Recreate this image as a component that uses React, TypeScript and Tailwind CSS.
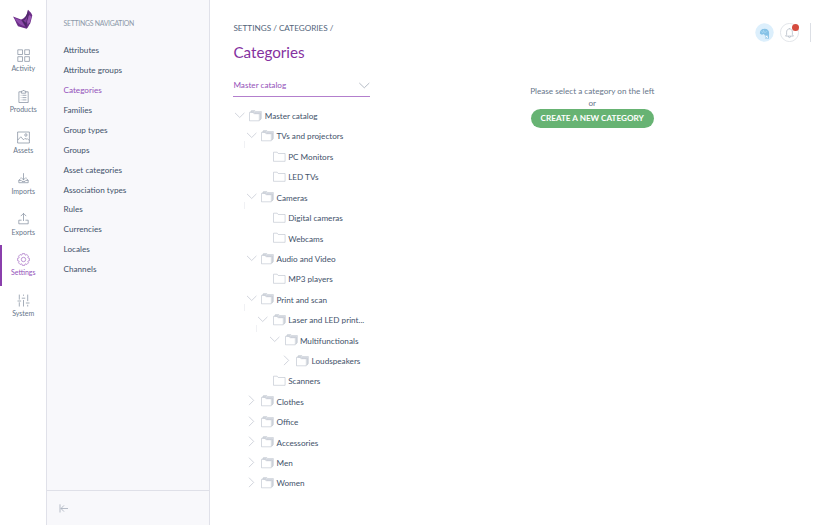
import React from "react";

type RailName = "Activity" | "Products" | "Assets" | "Imports" | "Exports" | "Settings" | "System";

const gear = (() => {
  const points: string[] = [];
  for (let i = 0; i < 8; i++) {
    const a = (i * Math.PI) / 4;
    for (const [d, r] of [[-0.3, 4.9], [-0.2, 6], [0.2, 6], [0.3, 4.9]]) {
      points.push(`${(6.5 + r * Math.cos(a + d)).toFixed(2)} ${(6.5 + r * Math.sin(a + d)).toFixed(2)}`);
    }
  }
  return `M${points.join("L")}Z`;
})();

const railPaths: Record<RailName, string> = {
  Activity: "M.8 .8h4.7v4.7H.8zM7.7 .8h4.7v4.7H7.7zM.8 7.7h4.7v4.7H.8zM7.7 7.7h4.7v4.7H7.7z",
  Products: "M4.5 1.8H1.9v10.7h9.3V1.8H8.6M4.4 1.2h1.1L6 .4h1.1l.5.8h1.1v2H4.4zM3.8 5.3h.6M5.4 5.3h4M3.8 7.6h.6M5.4 7.6h4M3.8 9.9h.6M5.4 9.9h4",
  Assets: "M.6 1h11.8v11H.6zM.8 9l3-3.2 2.7 3 1.5-1.5 1.2 1 1-.8 2 2M7.8 4a1.1 1.3 0 1 0 2.2 0a1.1 1.3 0 1 0-2.2 0",
  Imports: "M6.5 2.2v6.6M4 6.4l2.5 2.5L9 6.4M3.5 7.5 1.8 9.4v2.3h9.4V9.4L9.5 7.5M1.8 9.4h2.4l.8 1h3l.8-1h2.4",
  Exports: "M6.5 9V1.4M3.8 4.1l2.7-2.7 2.7 2.7M4.6 8.2H1.8v3.6h9.4V8.2H8.4",
  Settings: gear + "M4.3 6.5a2.2 2.2 0 1 0 4.4 0a2.2 2.2 0 1 0-4.4 0",
  System: "M2.3 .6v5M2.3 8.3v4.2M.5 7h3.6M6.5 .6v1.2M6.5 6v6.5M4.8 4.2h3.4M10.7 .6v6.5M10.7 10.8v1.7M8.9 9h3.6",
};

const rail = Object.keys(railPaths) as RailName[];

const nav = [
  "Attributes", "Attribute groups", "Categories", "Families", "Group types", "Groups",
  "Asset categories", "Association types", "Rules", "Currencies", "Locales", "Channels",
];

type Node = { label: string; level: number; kind: "open" | "closed" | "leaf"; guide?: number };

const tree: Node[] = [
  { label: "Master catalog", level: 0, kind: "open" },
  { label: "TVs and projectors", level: 1, kind: "open", guide: 1 },
  { label: "PC Monitors", level: 2, kind: "leaf" },
  { label: "LED TVs", level: 2, kind: "leaf" },
  { label: "Cameras", level: 1, kind: "open", guide: 1 },
  { label: "Digital cameras", level: 2, kind: "leaf" },
  { label: "Webcams", level: 2, kind: "leaf" },
  { label: "Audio and Video", level: 1, kind: "open" },
  { label: "MP3 players", level: 2, kind: "leaf" },
  { label: "Print and scan", level: 1, kind: "open", guide: 1 },
  { label: "Laser and LED print...", level: 2, kind: "open", guide: 2 },
  { label: "Multifunctionals", level: 3, kind: "open" },
  { label: "Loudspeakers", level: 4, kind: "closed" },
  { label: "Scanners", level: 2, kind: "leaf" },
  { label: "Clothes", level: 1, kind: "closed" },
  { label: "Office", level: 1, kind: "closed" },
  { label: "Accessories", level: 1, kind: "closed" },
  { label: "Men", level: 1, kind: "closed" },
  { label: "Women", level: 1, kind: "closed" },
];

const indents = ["pl-[1.7px]", "pl-[13.4px]", "pl-[25.1px]", "pl-[36.8px]", "pl-[48.5px]"];

function RailItem({ name }: { name: RailName }) {
  const active = name === "Settings";
  return (
    <a className={`flex h-[40.8px] flex-col items-center border-l-2 pr-[1.5px] pt-[8px] ${active ? "border-[#8a3fac] text-[#9452ba]" : "border-transparent text-[#67768a]"}`}>
      <svg width="13" height="13" viewBox="0 0 13 13" fill="none" stroke="currentColor" strokeWidth="0.65" strokeLinejoin="round" opacity="0.9">
        <path d={railPaths[name]} />
      </svg>
      <span className="mt-[1.35px] text-[7px] leading-[10px]">{name}</span>
    </a>
  );
}

function Arrow({ kind }: { kind: Node["kind"] }) {
  return (
    <svg width="10" height="12" viewBox="0 0 10 12" fill="none" stroke="#bec3ce" strokeWidth="0.7">
      {kind === "open" && <path d="M0 2.9 4.7 7.5l4.7-4.6" />}
      {kind === "closed" && <path d="M2 .7 6.7 5.4 2 10.1" />}
    </svg>
  );
}

function Folder({ stacked }: { stacked: boolean }) {
  return (
    <svg className="ml-[4.4px]" width="13" height="12" viewBox="0 0 13 12" fill="none" stroke="#b9bfcb" strokeWidth="0.6" strokeLinejoin="round">
      {stacked ? (
        <>
          <path fill="#e4e7ec" stroke="#bec4cf" strokeWidth="0.5" d="M2.4 2V.5h3.4l.8 1h5.8v7.1l-1 1.1V3.6H6L5.2 2.5H2z" />
          <path fill="#fff" d="M.5 2.4h3.6l.8 1.3h5.4v7.1H.5z" />
          <path strokeWidth="0.4" d="M1.4 2.3v-.8h3.7l.8 1.1h5.5v7.2h-1" />
        </>
      ) : (
        <path d="M.5 1.2h3.7l1 1.3h6.9v7.8H.5z" />
      )}
    </svg>
  );
}

export default function App() {
  return (
    <div className="flex h-[525px] w-[840px] overflow-hidden bg-white font-['Lato',sans-serif] text-[8.17px] text-[#3f526a]">
      <aside className="flex w-[46px] shrink-0 flex-col">
        <div className="flex h-[41px] shrink-0 justify-center pt-[9px]">
          <svg width="20" height="21" viewBox="0 0 20 21">
            <path fill="#6b2d87" d="M0 7.6 8 10.4C11.8 9.6 14.2 6 15 .8 17 2.6 18.8 4.6 19.3 6.6L17.3 14.2C15.8 16 15.2 18.5 13.6 19.8L5 17.2C3.2 14.4 2.2 11 0 7.6Z" />
            <path fill="#8e4cab" d="M1.6 8.9 8.4 11.6 12.2 17.4C8.4 16.4 4.2 14.4 1.6 8.9Z" />
            <path fill="#4b2766" d="M15 .8 15.8 6.4 13.8 12.8 13.6 19 9 11.4C12.6 9.6 14.4 5.8 15 .8Z" />
            <path fill="#9a5ab4" d="M16 6 18.6 7.4 16.8 13.6 14.4 15.4 14.2 12.4Z" />
            <path fill="#7e3d9b" d="M10.2 11.6C12.4 10.8 14 8.4 14.8 5.2L13.2 14Z" />
          </svg>
        </div>
        {rail.map((name) => <RailItem key={name} name={name} />)}
      </aside>

      <nav className="flex w-[164px] shrink-0 flex-col border-x border-[#e0e1e9] bg-[#f8f8fb]">
        <div className="flex-1 pl-[16.5px] pt-[18px]">
          <h2 className="h-[22.7px] text-[6.9px] leading-[10px] tracking-[-0.27px] text-[#8c98a9]">SETTINGS NAVIGATION</h2>
          {nav.map((label) => (
            <a key={label} className={`flex h-[19.86px] items-center ${label === "Categories" ? "text-[#9452ba]" : ""}`}>{label}</a>
          ))}
        </div>
        <div className="h-[35px] border-t border-[#dfe0e8] pl-[12px] pt-[13px]">
          <svg width="10" height="9" viewBox="0 0 10 9" fill="none" stroke="#a1aab7" strokeWidth="0.75">
            <path d="M1 .3v8.2M2 4.5h7M5 1.4 2 4.5l3 3.1" />
          </svg>
        </div>
      </nav>

      <main className="flex min-w-0 flex-1 flex-col pl-[23.4px]">
        <header className="flex h-[75px] shrink-0 justify-between">
          <div className="pt-[22px]">
            <div className="text-[8.17px] leading-[12px] text-[#53657b]">SETTINGS / CATEGORIES /</div>
            <h1 className="mt-[8px] text-[15.2px] leading-[20px] text-[#85319f]">Categories</h1>
          </div>
          <div className="flex items-start pr-[29.5px] pt-[23px]">
            <svg width="19" height="19" viewBox="0 0 19 19">
              <circle cx="9.5" cy="9.5" r="9.2" fill="#dceffc" />
              <path fill="#86c2e6" d="M4.8 10.3C5 7.2 7 5.8 9.5 5.8c3.2 0 4.7 2 4.6 4.5l-.3 5.5h-3.4l-.4-3.3-1.2-1.6-1.8.8-1.6-.8Z" />
              <path d="M6.3 8.5 8 9.7l.4-2.5 1.3 2.5 2.5-1.4" stroke="#b6dff6" strokeWidth=".6" fill="none" />
              <path fill="#fff" d="M9.9 12.8h2.9v2.4h-2z" />
              <path d="m10.3 13.3 1 1.4 1.1-1.2" stroke="#6daed4" strokeWidth=".6" fill="none" />
            </svg>
            <div className="relative ml-[5.5px] h-[19px] w-[19px]">
              <svg width="19" height="19" viewBox="0 0 19 19" fill="none" stroke="#a6afbb" strokeWidth=".65">
                <circle cx="9.5" cy="9.5" r="9.1" stroke="#d4d8df" />
                <path d="M5.6 13.1h7.8l-1-1.6V9.2c0-2-1-3.3-2.9-3.3S6.6 7.2 6.6 9.2v2.3zM8.3 13.2c0 1.8 2.4 1.8 2.4 0M9.5 5.8V5" />
              </svg>
              <span className="absolute right-0 top-[1px] h-[7px] w-[7px] rounded-full bg-[#d54b3e]" />
            </div>
            <div className="ml-[11px] h-[19px] w-px bg-[#dcdfe5]" />
          </div>
        </header>

        <div className="flex flex-1">
          <section className="w-[137px] shrink-0">
            <div className="flex h-[22px] items-center justify-between border-b border-[#b37fcd] text-[#9452ba]">
              <span className="pb-px">Master catalog</span>
              <svg width="11" height="8" viewBox="0 0 11 8" fill="none" stroke="#9ca5b2" strokeWidth="0.75"><path d="M.3 1 5.3 5.8l5-4.8" /></svg>
            </div>
            <ul className="pt-[8.5px]">
              {tree.map(({ label, level, kind, guide }) => (
                <li key={label} className={`relative flex h-[20.41px] items-center whitespace-nowrap ${indents[level]}`}>
                  <Arrow kind={kind} />
                  <Folder stacked={kind !== "leaf"} />
                  <span className="ml-[2.3px] pt-px">{label}</span>
                  {guide && <span className={`absolute top-[15px] h-[7px] w-px bg-[#f0f1f4] ${guide === 1 ? "left-[11px]" : "left-[23px]"}`} />}
                </li>
              ))}
            </ul>
          </section>
          <section className="flex flex-1 flex-col items-center pr-[26px] pt-[10px]">
            <p className="text-center leading-[12px] text-[#67768a]">Please select a category on the left<br />or</p>
            <button className="h-[18.5px] w-[123px] rounded-full bg-[#67b373] text-[8.17px] font-bold text-white">CREATE A NEW CATEGORY</button>
          </section>
        </div>
      </main>
    </div>
  );
}
